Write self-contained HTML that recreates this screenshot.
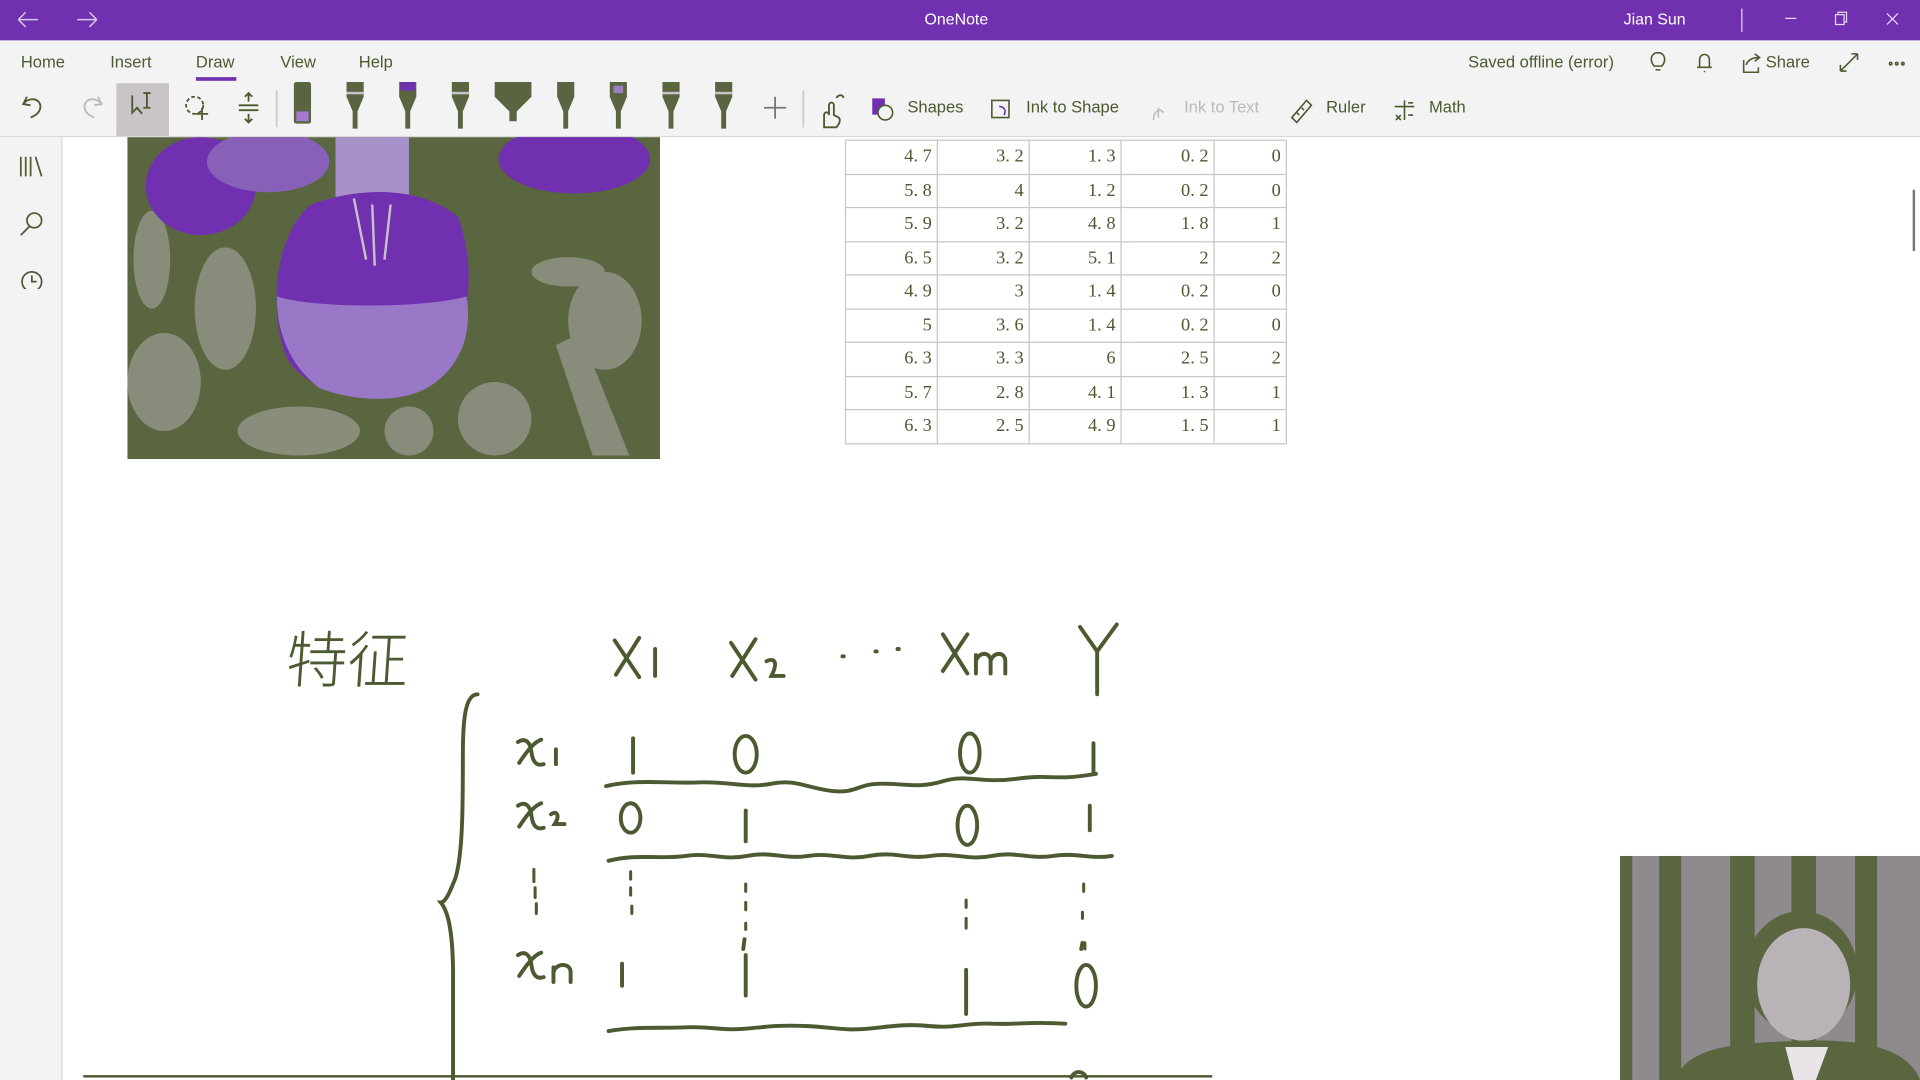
<!DOCTYPE html>
<html><head><meta charset="utf-8">
<style>
html,body{margin:0;padding:0;width:1920px;height:1080px;overflow:hidden;background:#fff}
#w{position:absolute;left:0;top:0;width:1568px;height:882px;overflow:hidden;transform:scale(1.22449);transform-origin:0 0;font-family:"Liberation Sans","Noto Sans CJK SC",sans-serif;color:#4b5a30}
.a{position:absolute;white-space:nowrap}
#title{position:absolute;left:0;top:0;width:1568px;height:33px;background:#7030b0;color:#fff;font-size:13px}
#rib{position:absolute;left:0;top:33px;width:1568px;height:78px;background:#f3f3f3;border-bottom:1px solid #d8d8d8}
#side{position:absolute;left:0;top:112px;width:51px;height:770px;background:#f3f3f3;border-right:1px solid #d8d8d8;box-sizing:border-box}
.tab{font-size:13.5px;top:10px}
.tb{font-size:13.5px;top:47px}
table{border-collapse:collapse;position:absolute;left:690px;top:114px;font-family:"Liberation Serif","Noto Serif CJK SC",serif;font-size:15px;color:#4b5a30}
td{border:1px solid #c8c4c8;height:26.5px;padding:0 4px 0 0;text-align:right;line-height:26px}
</style></head><body><div id="w">
<div id="title">
<svg class="a" style="left:12px;top:8px" width="70" height="16" stroke="#d8c8ee" fill="none" stroke-width="1.2"><path d="M3 8H19M3 8L9 2M3 8L9 14"/><path d="M51 8H67M67 8L61 2M67 8L61 14"/></svg>
<div class="a" style="left:755px;top:8px">OneNote</div>
<div class="a" style="left:1326px;top:8px">Jian Sun</div>
<div class="a" style="left:1422px;top:7px;width:1px;height:19px;background:#e8dcf5"></div>
<svg class="a" style="left:1455px;top:8px" width="100" height="16" stroke="#e8dcf5" fill="none" stroke-width="1"><path d="M3 7H12"/><rect x="44" y="4" width="7" height="8"/><path d="M46 4V2H53V10H51"/><path d="M86 3L95 12M95 3L86 12"/></svg>
</div>
<div id="rib">
<div class="a tab" style="left:17px">Home</div>
<div class="a tab" style="left:90px">Insert</div>
<div class="a tab" style="left:160px">Draw</div>
<div class="a" style="left:160px;top:30px;width:33px;height:3px;background:#7030b0"></div>
<div class="a tab" style="left:229px">View</div>
<div class="a tab" style="left:293px">Help</div>
<div class="a tab" style="left:1199px">Saved offline (error)</div>
<div class="a tab" style="left:1442px">Share</div>
<svg class="a" style="left:1340px;top:8px" width="220" height="20" stroke="#4b5a30" fill="none" stroke-width="1.3"><path d="M12 16h4M11 13c-4-4-3-11 3-11s7 7 3 11z"/><path d="M46 14h12M48 14V8c0-6 8-6 8 0v6M52 17v1"/><path d="M84 8v10h12v-4M86 12c2-5 6-6 10-6M93 3l4 3-4 3"/><path d="M163 17L177 3M163 17v-5M163 17h5M177 3h-5M177 3v5"/><circle cx="204" cy="11" r="1"/><circle cx="209" cy="11" r="1"/><circle cx="214" cy="11" r="1"/></svg>
<div class="a" style="left:95px;top:35px;width:43px;height:43px;background:#c9c4c8"></div>
<svg class="a" style="left:0;top:33px" width="760" height="46" stroke="#4b5a30" fill="none" stroke-width="1.5">
<path d="M22 13l-3 6 6 1M19 19c4-6 14-5 14 2 0 4-3 7-8 9"/>
<path d="M80 13l3 6-6 1M83 19c-4-6-14-5-14 2 0 4 3 7 8 9" stroke="#bbb"/>
<path d="M108 12l0 14 4-4 4 5M117 10h6M120 10v12M117 22h6" />
<circle cx="159" cy="20" r="7" stroke-dasharray="3 2"/><path d="M165 22v10M160 27h10"/>
<path d="M195 20h16M195 24h16M203 10v7M200 13l3-3 3 3M203 27v7M200 31l3 3 3-3"/>
<path d="M226 8v30" stroke="#ccc"/>
<path d="M656 8v30" stroke="#ccc"/>
<path d="M633 13v18M624 22h18" stroke="#777"/>
<path d="M673 38v-10c0-3 4-3 4 0v-8c0-3 4-3 4 0v8l4 2c2 2 0 6-2 8z M683 14c2-3 5-3 6 0"/>
</svg>
<svg class="a" style="left:236px;top:34px" width="380" height="44">
<g fill="#596440">
<rect x="4" y="0" width="14" height="34" rx="2" fill="#596440"/><rect x="6" y="24" width="10" height="8" fill="#a37ad0"/>
<path d="M47 0h14v12l-5 12v14h-4V24l-5-12z"/>
<path d="M90 0h14v12l-5 12v14h-4V24l-5-12z"/><rect x="91" y="0" width="12" height="7" fill="#7030b0"/>
<path d="M133 0h14v12l-5 12v14h-4V24l-5-12z"/>
<path d="M168 0h30v12l-12 12v8h-6v-8l-12-12z"/>
<path d="M219 0h14v12l-5 12v14h-4V24l-5-12z"/>
<path d="M262 0h14v12l-5 12v14h-4V24l-5-12z"/><rect x="265" y="3" width="8" height="6" fill="#9c7fc0"/>
<path d="M305 0h14v12l-5 12v14h-4V24l-5-12z"/>
<path d="M348 0h14v12l-5 12v14h-4V24l-5-12z"/>
</g><g fill="#c8c4c8"><rect x="47" y="8" width="14" height="2"/><rect x="133" y="8" width="14" height="2"/><rect x="305" y="8" width="14" height="2"/><rect x="348" y="8" width="14" height="2"/></g></svg>
<svg class="a" style="left:710px;top:45px" width="470" height="24" fill="none" stroke-width="1.3">
<rect x="3" y="3" width="9" height="12" fill="#7030b0" stroke="#7030b0"/><circle cx="13" cy="14" r="6" stroke="#4b5a30" fill="#f3f3f3"/>
<rect x="100" y="4" width="14" height="14" stroke="#4b5a30"/><path d="M106 9c4 0 6 3 4 7" stroke="#7030b0"/>
<path d="M232 20c0-8 6-10 8-6M236 10v8" stroke="#bbb"/>
<path d="M345 18l12-14 4 4-12 14zM349 14l2 2M353 10l2 2" stroke="#4b5a30"/>
<path d="M437 4v16M429 9h16M430 16l4 4M434 16l-4 4M440 6h4M440 16h4" stroke="#4b5a30"/>
</svg>
<div class="a tb" style="left:741px">Shapes</div>
<div class="a tb" style="left:838px">Ink to Shape</div>
<div class="a tb" style="left:967px;color:#bbb">Ink to Text</div>
<div class="a tb" style="left:1083px">Ruler</div>
<div class="a tb" style="left:1167px">Math</div>
</div>
<div id="side">
<svg class="a" style="left:14px;top:14px" width="26" height="110" stroke="#4b5a30" fill="none" stroke-width="1.4"><path d="M3 2v16M7 2v16M11 2v16M15 2l5 16"/><circle cx="14" cy="54" r="6"/><path d="M10 59l-7 7"/><circle cx="12" cy="104" r="8"/><path d="M12 99v5h4"/></svg>
</div>
<div class="a" style="left:1562px;top:155px;width:2px;height:50px;background:#777"></div>

<svg class="a" style="left:104px;top:112px" width="435" height="263" viewBox="0 0 435 263">
<rect width="435" height="263" fill="#5a6640"/>
<g fill="#a9a6a2" opacity="0.6">
<ellipse cx="80" cy="140" rx="25" ry="50"/><ellipse cx="30" cy="200" rx="30" ry="40"/><ellipse cx="140" cy="240" rx="50" ry="20"/>
<ellipse cx="390" cy="150" rx="30" ry="40"/><path d="M350 170l20-10 40 100h-30z"/><ellipse cx="300" cy="230" rx="30" ry="30"/><ellipse cx="360" cy="110" rx="30" ry="12"/>
<ellipse cx="20" cy="100" rx="15" ry="40"/><ellipse cx="230" cy="240" rx="20" ry="20"/>
</g>
<ellipse cx="60" cy="40" rx="45" ry="40" fill="#7030b0"/><ellipse cx="115" cy="20" rx="50" ry="25" fill="#8860b8"/>
<ellipse cx="365" cy="18" rx="62" ry="28" fill="#7030b0"/>
<rect x="170" y="0" width="60" height="55" fill="#a890c8"/>
<path d="M150 55c40-15 90-15 120 10 15 40 10 90-10 120-20 25-50 30-60 25-20 5-55-5-70-30-15-40-10-100 20-125z" fill="#7030b0"/>
<path d="M122 130c30 10 120 10 155 0 5 30-5 55-25 70-25 20-70 15-95 5-20-15-35-40-35-75z" fill="#9a78c8"/>
<path d="M185 50l10 50M200 55l2 50M215 55l-5 45" stroke="#c8c0c4" stroke-width="2"/>
</svg>

<table>
<tr><td style="width:70px">4. 7</td><td style="width:70px">3. 2</td><td style="width:70px">1. 3</td><td style="width:71px">0. 2</td><td style="width:54px">0</td></tr>
<tr><td>5. 8</td><td>4</td><td>1. 2</td><td>0. 2</td><td>0</td></tr>
<tr><td>5. 9</td><td>3. 2</td><td>4. 8</td><td>1. 8</td><td>1</td></tr>
<tr><td>6. 5</td><td>3. 2</td><td>5. 1</td><td>2</td><td>2</td></tr>
<tr><td>4. 9</td><td>3</td><td>1. 4</td><td>0. 2</td><td>0</td></tr>
<tr><td>5</td><td>3. 6</td><td>1. 4</td><td>0. 2</td><td>0</td></tr>
<tr><td>6. 3</td><td>3. 3</td><td>6</td><td>2. 5</td><td>2</td></tr>
<tr><td>5. 7</td><td>2. 8</td><td>4. 1</td><td>1. 3</td><td>1</td></tr>
<tr><td>6. 3</td><td>2. 5</td><td>4. 9</td><td>1. 5</td><td>1</td></tr>
</table>

<div class="a" style="left:234px;top:500px;font-family:'WenQuanYi Zen Hei','Noto Sans CJK SC',sans-serif;font-size:50px;font-weight:300;color:#4b5a30;transform:skewX(-4deg)">特征</div>
<svg class="a" style="left:0;top:0" width="1568" height="882" fill="none" stroke="#4b5a30" stroke-width="3.2" stroke-linecap="round">
<path d="M502 523l20 30M522 521l-19 30M535 530v22"/>
<path d="M597 525l20 30M617 522l-19 30M626 540c6-3 10 0 4 12h10"/>
<path d="M688 536h1M715 532h1M733 530h1"/>
<path d="M770 518l20 32M790 518l-20 30M797 550v-15M797 540c2-8 12-8 12 0v10M809 540c2-8 12-8 12 0v10"/>
<path d="M882 512l14 20 16-22M896 532v35"/>
<path d="M390 567c-10 0-12 20-12 50 0 40 0 80-6 100-4 10-8 20-12 20 5 6 10 20 10 60 0 40 0 80 0 100 0 20 0 50 4 70"/>
<path d="M423 606c6-4 10 0 11 8s4 12 10 10M442 604c-6 2-12 10-18 19M454 612v12"/>
<path d="M517 603v28M893 607v25"/>
<ellipse cx="609" cy="616" rx="9" ry="15"/><ellipse cx="792" cy="615" rx="8" ry="16"/>
<path d="M495 642C520 636 545 640 570 639S610 644 630 640 660 644 680 646 700 640 720 640 750 644 770 638 800 640 830 636 860 638 895 632 933 634"/>
<path d="M423 658c6-4 10 0 11 8s4 12 10 10M442 656c-6 2-12 10-18 19M450 665c4-3 8 0 3 8h8"/>
<ellipse cx="515" cy="668" rx="8" ry="12"/><path d="M609 662v25M890 658v20"/><ellipse cx="790" cy="674" rx="8" ry="16"/>
<path d="M497 703C520 697 540 702 560 699S590 703 610 699 640 702 660 699 690 703 710 699 740 702 760 699 790 703 810 699 840 702 860 699 890 702 908 699"/>
<path d="M436 710v10M437 725v8M438 738v8M515 712v6M515 725v6M516 740v6M609 722v6M609 737v6M609 754v5M789 735v6M789 750v8M885 722v6M884 745v5M886 770v5" stroke-width="2.5"/>
<path d="M423 780c6-4 10 0 11 8s4 12 10 10M442 778c-6 2-12 10-18 19M452 802v-12M452 794c2-8 14-8 14 0v8M508 787v18M609 780v33M789 792v36M608 767l-1 8M884 770l-1 5"/>
<ellipse cx="887" cy="805" rx="8" ry="17"/>
<path d="M497 842C520 838 540 840 560 839S590 842 610 840 640 837 660 838 690 842 710 840 740 836 760 838 790 835 810 836 840 834 870 836 931 835"/>
<path d="M875 880c2-6 10-6 12 0"/>
</svg>
<div class="a" style="left:68px;top:878px;width:922px;height:2px;background:#4b5a30"></div>

<svg class="a" style="left:1323px;top:699px" width="245" height="183" viewBox="0 0 245 183">
<rect width="245" height="183" fill="#8f8a8e"/>
<g fill="#5a6640"><rect x="0" y="0" width="10" height="183"/><rect x="32" y="0" width="18" height="183"/><rect x="90" y="0" width="20" height="183"/><rect x="140" y="0" width="20" height="183"/><rect x="192" y="0" width="18" height="183"/></g>
<ellipse cx="148" cy="95" rx="46" ry="50" fill="#5a6640"/>
<ellipse cx="150" cy="105" rx="38" ry="46" fill="#b9b3b8"/>
<path d="M45 183c10-28 50-30 100-32s90 5 100 32z" fill="#5a6640"/>
<path d="M135 156h35l-10 27h-18z" fill="#e8e4e8"/>
</svg>
</div></body></html>
